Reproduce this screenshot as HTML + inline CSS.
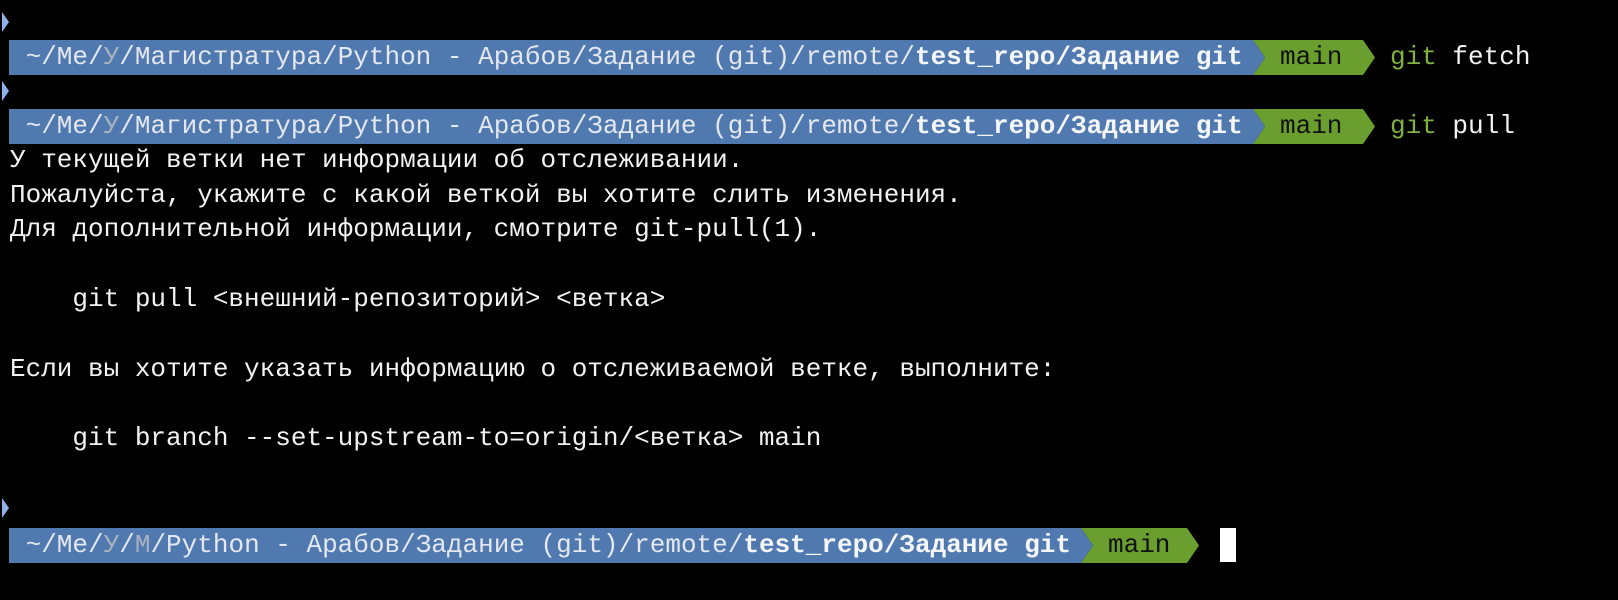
<!DOCTYPE html>
<html><head><meta charset="utf-8"><style>
html,body{margin:0;padding:0;background:#000;width:1618px;height:600px;overflow:hidden}
body{position:relative;font-family:"Liberation Mono","Noto Sans CJK SC",monospace;font-size:26px;color:#f2f2f2}
.l{position:absolute;left:10px;height:35px;line-height:35px;white-space:pre}
.blue{position:absolute;background:#5079b0;height:35px}
.green{position:absolute;background:#6a9f2f;height:35px}
.pt{position:absolute;height:35px;line-height:35px;white-space:pre;color:#e4e8ee}
.d{color:#a9b3c0}
b{color:#f4f6f8}
.g{color:#7fb23f}
.chev{position:absolute;left:2px}
</style></head><body>

<div class="l" style="top:-30px">                                      .                                 ,</div>

<svg class="chev" style="top:12px" width="10" height="20"><polygon points="0,0 7,10 0,20" fill="#8fb0e8"/></svg>
<svg class="chev" style="top:81px" width="10" height="20"><polygon points="0,0 7,10 0,20" fill="#8fb0e8"/></svg>
<svg class="chev" style="top:498px" width="10" height="20"><polygon points="0,0 7,10 0,20" fill="#8fb0e8"/></svg>

<!-- prompt 1 -->
<div class="blue" style="left:9px;top:40px;width:1244px"></div>
<svg style="position:absolute;left:1253px;top:40px" width="125" height="35"><polygon points="0,0 12,17.5 0,35 110,35 122,17.5 110,0" fill="#6a9f2f"/><polygon points="0,0 12,17.5 0,35" fill="#5079b0"/></svg>
<div class="pt" style="left:10px;top:40px"> ~/Me/<span class="d">У</span>/Магистратура/Python - Арабов/Задание (git)/remote/<b>test_repo/Задание git</b></div>
<div class="pt" style="left:1280px;top:40px;color:#111">main</div>
<div class="l" style="left:1390px;top:40px"><span class="g">git</span> fetch</div>

<!-- prompt 2 -->
<div class="blue" style="left:9px;top:109px;width:1244px"></div>
<svg style="position:absolute;left:1253px;top:109px" width="125" height="35"><polygon points="0,0 12,17.5 0,35 110,35 122,17.5 110,0" fill="#6a9f2f"/><polygon points="0,0 12,17.5 0,35" fill="#5079b0"/></svg>
<div class="pt" style="left:10px;top:109px"> ~/Me/<span class="d">У</span>/Магистратура/Python - Арабов/Задание (git)/remote/<b>test_repo/Задание git</b></div>
<div class="pt" style="left:1280px;top:109px;color:#111">main</div>
<div class="l" style="left:1390px;top:109px"><span class="g">git</span> pull</div>

<div class="l" style="top:143px">У текущей ветки нет информации об отслеживании.</div>
<div class="l" style="top:178px">Пожалуйста, укажите с какой веткой вы хотите слить изменения.</div>
<div class="l" style="top:212px">Для дополнительной информации, смотрите git-pull(1).</div>
<div class="l" style="top:282px">    git pull &lt;внешний-репозиторий&gt; &lt;ветка&gt;</div>
<div class="l" style="top:352px">Если вы хотите указать информацию о отслеживаемой ветке, выполните:</div>
<div class="l" style="top:421px">    git branch --set-upstream-to=origin/&lt;ветка&gt; main</div>

<!-- prompt 3 -->
<div class="blue" style="left:9px;top:528px;width:1072px"></div>
<svg style="position:absolute;left:1081px;top:528px" width="125" height="35"><polygon points="0,0 12,17.5 0,35 106,35 118,17.5 106,0" fill="#6a9f2f"/><polygon points="0,0 12,17.5 0,35" fill="#5079b0"/></svg>
<div class="pt" style="left:10px;top:528px"> ~/Me/<span class="d">У</span>/<span class="d">М</span>/Python - Арабов/Задание (git)/remote/<b>test_repo/Задание git</b></div>
<div class="pt" style="left:1108px;top:528px;color:#111">main</div>
<div style="position:absolute;left:1220px;top:528px;width:16px;height:34px;background:#fff"></div>

</body></html>
